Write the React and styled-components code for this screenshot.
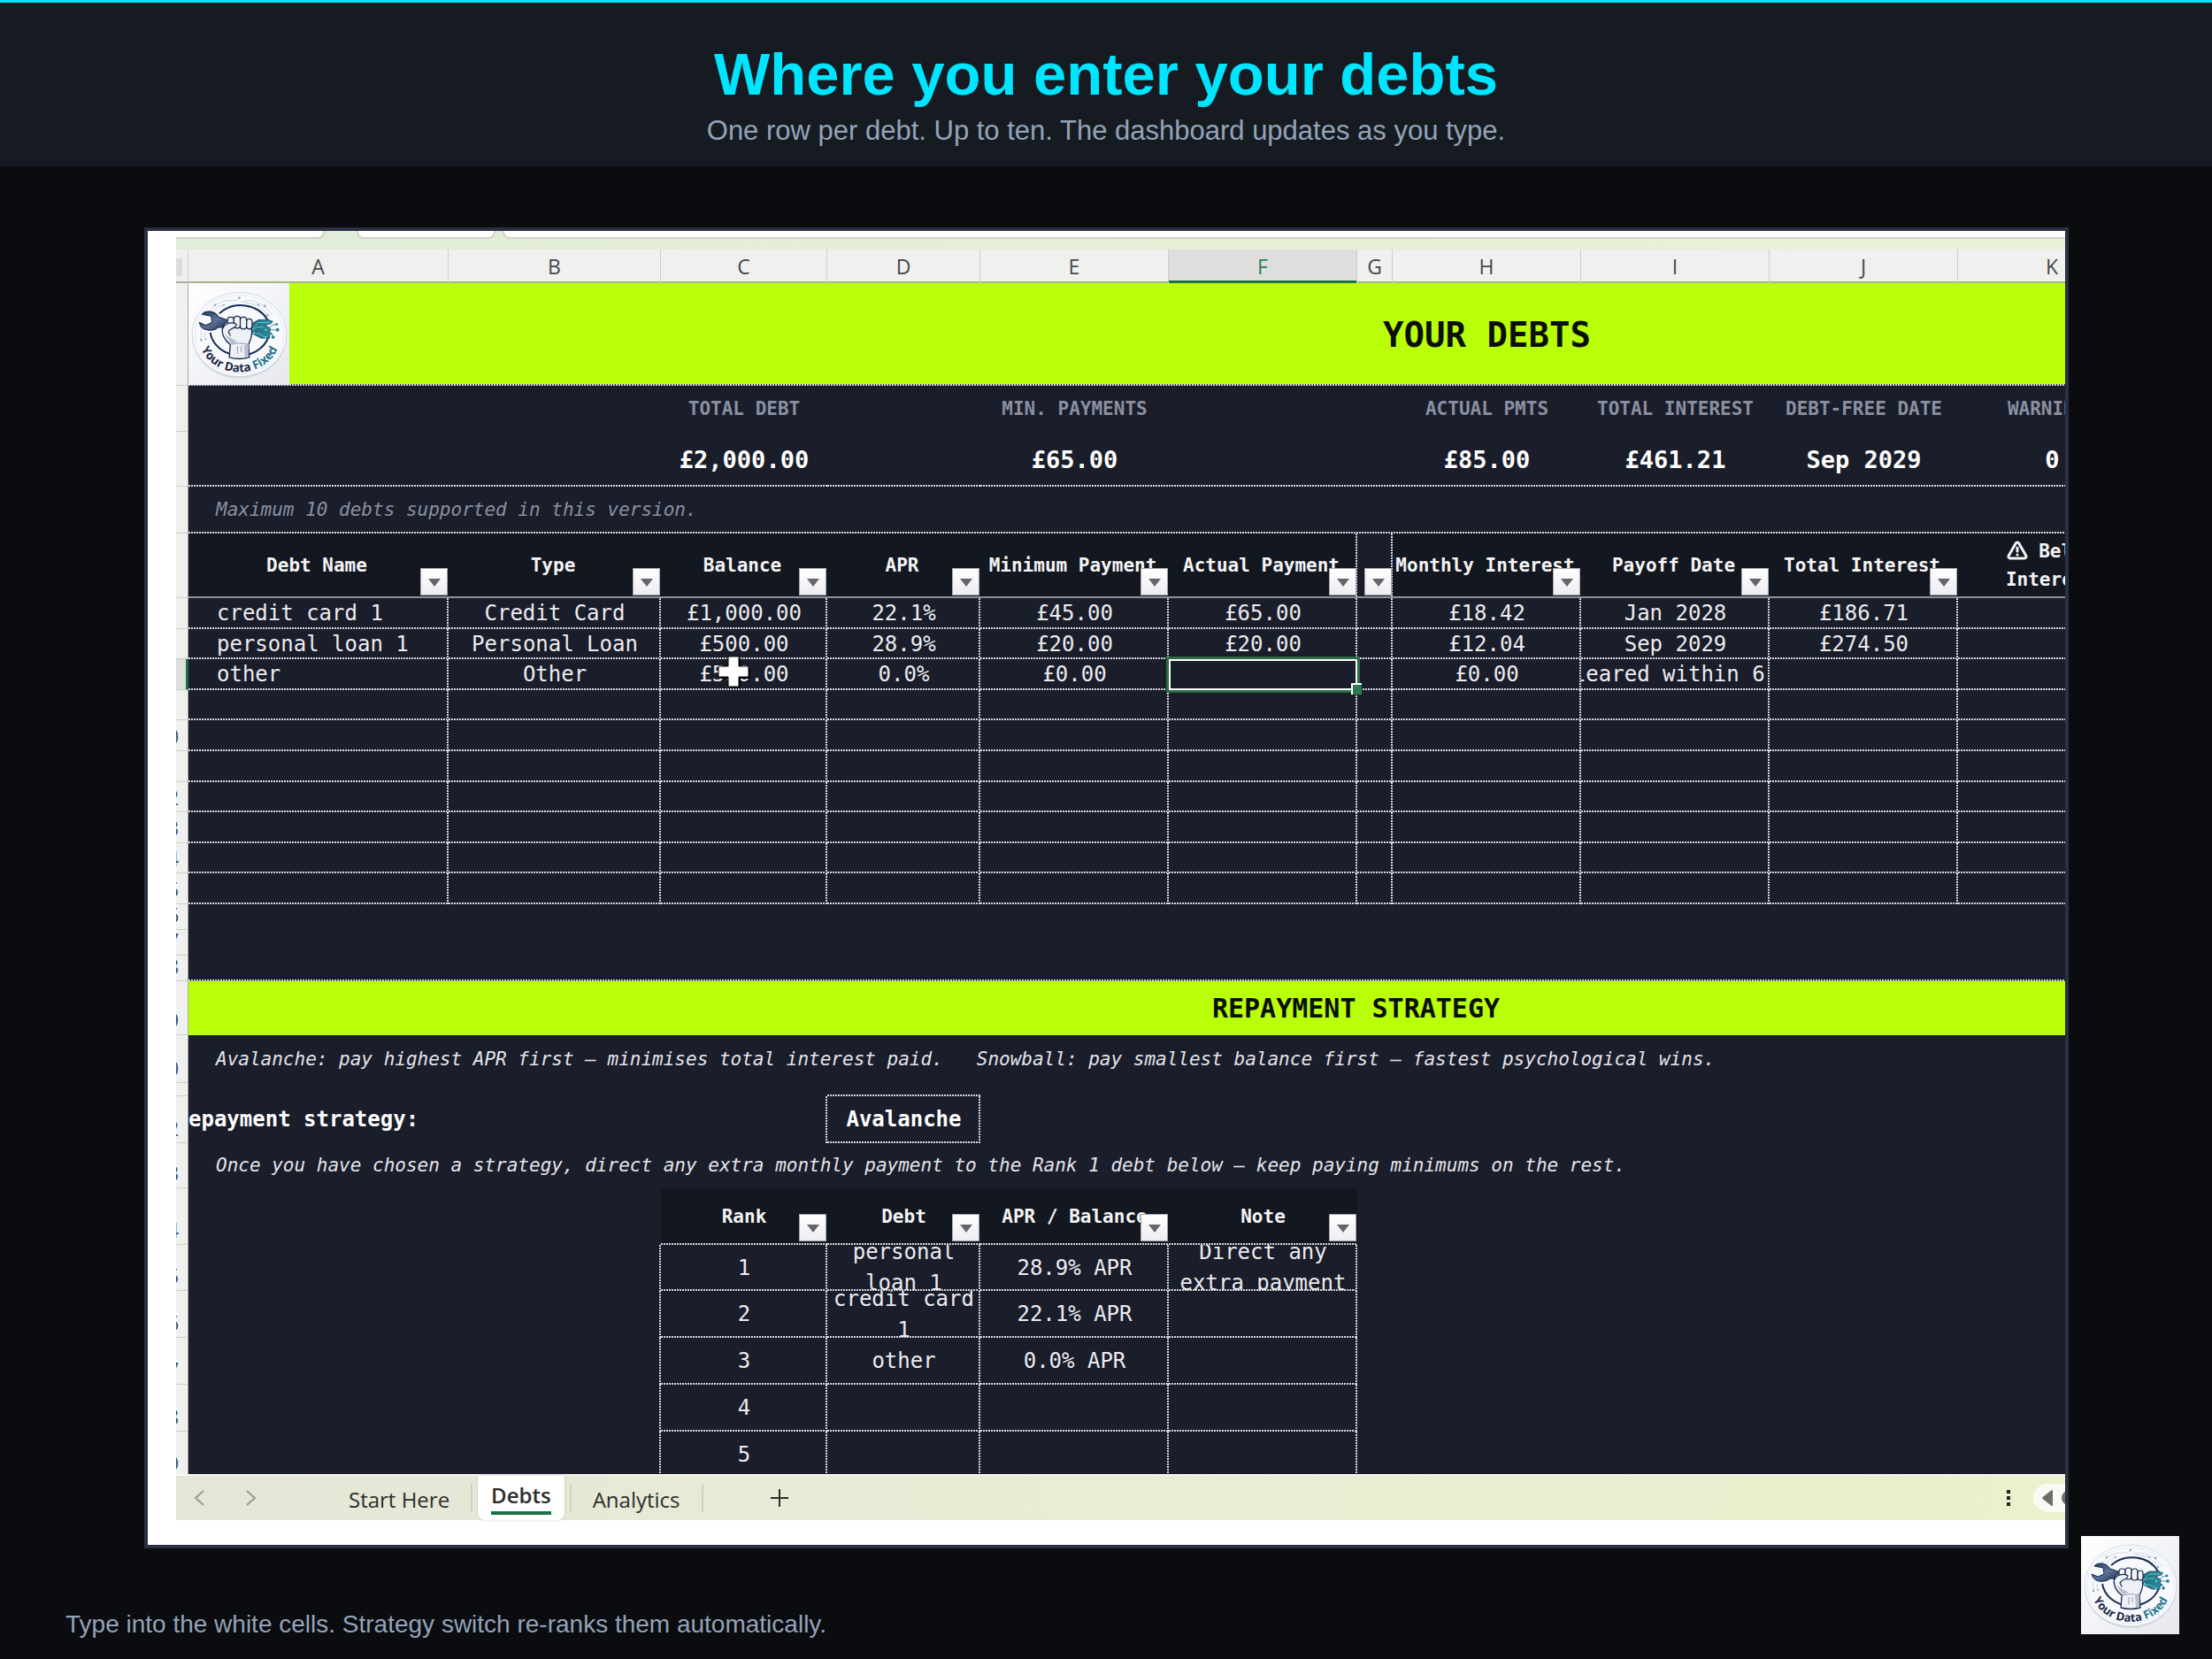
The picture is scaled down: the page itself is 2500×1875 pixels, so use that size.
import React from "react";
import styled, { createGlobalStyle, css } from "styled-components";
import { TriangleAlert } from "lucide-react";

const columns = [
  { name: "A", width: 294 },
  { name: "B", width: 240 },
  { name: "C", width: 188 },
  { name: "D", width: 173 },
  { name: "E", width: 213 },
  { name: "F", width: 213 },
  { name: "G", width: 40 },
  { name: "H", width: 213 },
  { name: "I", width: 213 },
  { name: "J", width: 213 },
  { name: "K", width: 213 },
];

// gutter, A to K, then the two columns that scroll out of view
const template = `14px ${columns.map((c) => `${c.width}px`).join(" ")} 426px 296px`;

const totals = [
  { label: "", value: "", span: 2 },
  { label: "TOTAL DEBT", value: "£2,000.00" },
  { label: "", value: "" },
  { label: "MIN. PAYMENTS", value: "£65.00" },
  { label: "", value: "", span: 2 },
  { label: "ACTUAL PMTS", value: "£85.00" },
  { label: "TOTAL INTEREST", value: "£461.21" },
  { label: "DEBT-FREE DATE", value: "Sep 2029" },
  { label: "WARNINGS", value: "0" },
  { label: "", value: "", span: 2 },
];

const debtHeads = [
  "Debt Name",
  "Type",
  "Balance",
  "APR",
  "Minimum Payment",
  "Actual Payment",
  "",
  "Monthly Interest",
  "Payoff Date",
  "Total Interest",
];

const debts = [
  ["credit card 1", "Credit Card", "£1,000.00", "22.1%", "£45.00", "£65.00", "", "£18.42", "Jan 2028", "£186.71", ""],
  ["personal loan 1", "Personal Loan", "£500.00", "28.9%", "£20.00", "£20.00", "", "£12.04", "Sep 2029", "£274.50", ""],
  ["other", "Other", "£500.00", "0.0%", "£0.00", "", "", "£0.00", "leared within 6 ", "", ""],
];

const emptyDebt = Array(11).fill("");

const debtRows = [35, 34, 35, 34, 35, 35, 34, 35, 34, 35].map((height, i) => ({
  height,
  num: i + 6,
  cells: debts[i] || emptyDebt,
}));

const ranks = [
  { num: 25, height: 52, cells: ["1", "personal loan 1", "28.9% APR", "Direct any extra payment"] },
  { num: 26, height: 53, cells: ["2", "credit card 1", "22.1% APR", ""] },
  { num: 27, height: 53, cells: ["3", "other", "0.0% APR", ""] },
  { num: 28, height: 53, cells: ["4", "", "", ""] },
  { num: 29, height: 53, cells: ["5", "", "", ""] },
];

const Logo = ({ className, id }) => (
  <svg className={className} viewBox="0 0 111 111" preserveAspectRatio="none" role="img">
    <defs>
      <linearGradient id={`${id}-paper`} x1="0" y1="0" x2="1" y2="1">
        <stop offset="0" stopColor="#ffffff" />
        <stop offset="1" stopColor="#e6e8ee" />
      </linearGradient>
      <linearGradient id={`${id}-steel`} x1="0" y1="0" x2="1" y2="1">
        <stop offset="0" stopColor="#1f3357" />
        <stop offset="0.5" stopColor="#5b7398" />
        <stop offset="1" stopColor="#1c2c4e" />
      </linearGradient>
      <linearGradient id={`${id}-data`} x1="0" y1="0" x2="1" y2="0">
        <stop offset="0" stopColor="#22406b" />
        <stop offset="1" stopColor="#2a8f9a" />
      </linearGradient>
      <path id={`${id}-arc`} d="M11 58 A45 39 0 0 0 101 58" />
    </defs>
    <rect width="111" height="111" fill={`url(#${id}-paper)`} />
    <ellipse cx="56" cy="58" rx="52" ry="46" fill="#d5d9e2" />
    <ellipse cx="56" cy="56" rx="52" ry="46" fill="#f8f9fc" stroke="#bcc8d8" strokeWidth="0.6" />
    <ellipse cx="56" cy="56" rx="49" ry="43" fill="none" stroke="#d3dbe6" strokeWidth="0.5" />
    <g fill="none" stroke="#b4c2d2" strokeWidth="0.6">
      <path d="M22 33 L29 24 L40 19 L52 19 L56 16" />
      <path d="M28 31 L33 26 L39 24" />
      <path d="M58 20 L70 19 L84 25 L92 35" />
      <path d="M61 21 L77 24 L87 34" />
      <path d="M14 61 V52 M18 60 V54" />
    </g>
    <g fill="#8fa5bd">
      <circle cx="56" cy="16" r="1.3" />
      <circle cx="29" cy="24" r="1.2" />
      <circle cx="39" cy="24" r="1" />
      <circle cx="77" cy="24" r="1.1" />
      <circle cx="84" cy="25" r="1.4" />
      <circle cx="87" cy="35" r="1.2" />
      <circle cx="14" cy="62" r="1.2" />
      <circle cx="19" cy="61" r="1" />
    </g>
    <path
      d="M34 33 A33 29 0 0 1 87 40 M88 59 A33 29 0 0 1 24 54"
      fill="none"
      stroke="#1b2d50"
      strokeWidth="2"
    />
    <path
      d="M15 34 C19 29 29 30 33 37 L45 41 L45 49 L33 48 C27 53 14 53 12 43 L19 46 L26 43 L25 36 Z"
      fill={`url(#${id}-steel)`}
      stroke="#16264a"
      strokeWidth="1"
      strokeLinejoin="round"
    />
    <path
      d="M49 50 L70 44 L77 40 L89 40 L91 44 L84 46 L90 49 L89 60 L80 60 L70 55 L52 53 Z"
      fill={`url(#${id}-data)`}
      stroke="#1d4266"
      strokeWidth="0.8"
      strokeLinejoin="round"
    />
    <g fill="none" stroke="#63d3cf" strokeWidth="0.9">
      <path d="M60 53 H68 L75 48 H83" />
      <path d="M70 50 L77 43 H90" />
      <path d="M66 55 H78 L84 59" />
    </g>
    <g fill="none" stroke="#35859a" strokeWidth="0.9">
      <path d="M88 50 L92 46 L96 45 M89 51 H97 M88 56 H92 L95 59 M90 42 H93" />
    </g>
    <g fill="#2c7f93">
      <circle cx="97" cy="45" r="1.4" />
      <circle cx="98" cy="51" r="1.9" />
      <circle cx="93" cy="59" r="1.7" />
      <circle cx="91" cy="42" r="1.6" />
      <circle cx="91" cy="55" r="1.2" />
    </g>
    <g fill="#6de4f0">
      <circle cx="72" cy="54" r="1" />
      <circle cx="85" cy="51" r="1.1" />
      <circle cx="85" cy="59" r="1" />
      <circle cx="65" cy="54" r="0.9" />
    </g>
    <path
      d="M38 47 C39 43 44 41 51 42 L69 49 C71 55 69 61 66 67 L67 81 Q56 84 45 81 L46 67 C41 63 35 57 38 47 Z"
      fill="#eef0f5"
      stroke="#1b2d50"
      strokeWidth="1.3"
      strokeLinejoin="round"
    />
    <path d="M61 68 L62 81 Q65 81 66 80 L66 66 Z M40 56 L47 66 L54 64 Z" fill="#b7c0d2" />
    <path d="M46 67 Q56 64 66 67 M54 69 V77 M58 69 V75" fill="none" stroke="#7b89a5" strokeWidth="0.8" />
    <g fill="#f4f5f9" stroke="#1b2d50" strokeWidth="1.2">
      <rect x="43" y="37" width="7" height="11" rx="3" />
      <rect x="50" y="36" width="7" height="13" rx="3" />
      <rect x="57" y="37" width="7" height="13" rx="3" />
      <rect x="64" y="39" width="6" height="11" rx="3" />
    </g>
    <path
      d="M38 49 C40 43 50 42 53 45 C52 50 45 49 44 53 L46 57"
      fill="#eef0f5"
      stroke="#1b2d50"
      strokeWidth="1.2"
      strokeLinecap="round"
    />
    <text fontFamily="Open Sans, sans-serif" fontWeight="700" fontSize="13" textAnchor="middle" fill="#1a2545">
      <textPath href={`#${id}-arc`} startOffset="50%">
        Your Data <tspan fill="#21708a">Fixed</tspan>
      </textPath>
    </text>
  </svg>
);

const Filter = ({ column, raised }) => (
  <FilterButton type="button" aria-label={`Filter ${column}`} $raised={raised}>
    <svg width="14" height="10" viewBox="0 0 14 10">
      <path d="M0 1 H14 L7 10 Z" fill="#66666a" />
    </svg>
  </FilterButton>
);

const SheetRow = ({ num, height, current, children }) => (
  <Row $height={height}>
    <Gutter scope="row" $current={current}>
      {num > 9 && <span>{num}</span>}
    </Gutter>
    {children}
  </Row>
);

const App = () => {
  return (
    <Page>
      <GlobalStyle />
      <Header>
        <h1>Where you enter your debts</h1>
        <p>One row per debt. Up to ten. The dashboard updates as you type.</p>
      </Header>

      <Main>
        <Frame>
          <FormulaBar>
            <BarBox $width="168px" $first />
            <BarBox $width="157px" />
            <BarBox $grow />
          </FormulaBar>

          <Viewport>
            <Sheet>
              <thead>
                <Row $height={38}>
                  <Corner />
                  {columns.map((c) => (
                    <ColumnHead key={c.name} scope="col" $current={c.name === "F"}>
                      {c.name}
                    </ColumnHead>
                  ))}
                  <ColumnHead />
                  <ColumnHead />
                </Row>
              </thead>
              <tbody>
                <SheetRow num={1} height={116}>
                  <Banner $span={13} $size="39px" $bottom>
                    <SheetLogo id="sheet-logo" />
                    YOUR DEBTS
                  </Banner>
                </SheetRow>
                <SheetRow num={2} height={52}>
                  {totals.map((t, i) => (
                    <LabelCell key={i} $span={t.span}>
                      {t.label}
                    </LabelCell>
                  ))}
                </SheetRow>
                <SheetRow num={3} height={62}>
                  {totals.map((t, i) => (
                    <ValueCell key={i} $span={t.span} $bottom>
                      {t.value}
                    </ValueCell>
                  ))}
                </SheetRow>
                <SheetRow num={4} height={53}>
                  <NoteCell $span={13} $bottom $muted>
                    Maximum 10 debts supported in this version.
                  </NoteCell>
                </SheetRow>
                <SheetRow num={5} height={73}>
                  {debtHeads.map((head, i) => (
                    <HeadCell key={i} $solid $blank={!head} $right={i === 5 || i === 6}>
                      {head}
                      <Filter column={head || "G"} />
                    </HeadCell>
                  ))}
                  <HeadCell $solid>
                    <span>
                      <WarningIcon size={24} strokeWidth={3} /> Below
                      <br />
                      Interest
                    </span>
                  </HeadCell>
                </SheetRow>

                {debtRows.map((row) => (
                  <SheetRow key={row.num} num={row.num} height={row.height} current={row.num === 8}>
                    {row.cells.map((text, i) => {
                      const selected = row.num === 8 && i === 5;
                      const hovered = row.num === 8 && i === 2;
                      return (
                        <Cell key={i} $bottom $right $left={i === 0} $open={selected || hovered}>
                          {text}
                          {selected && <Selection />}
                          {hovered && (
                            <Pointer viewBox="0 0 38 38">
                              <path
                                d="M13 2 H25 V13 H36 V25 H25 V36 H13 V25 H2 V13 H13 Z"
                                transform="translate(1 1)"
                                fill="#05060a"
                              />
                              <path d="M12 1 H24 V12 H35 V24 H24 V35 H12 V24 H1 V12 H12 Z" fill="#ffffff" stroke="#05060a" />
                            </Pointer>
                          )}
                        </Cell>
                      );
                    })}
                  </SheetRow>
                ))}

                <SheetRow num={16} height={29} />
                <SheetRow num={17} height={29} />
                <SheetRow num={18} height={29}>
                  <Cell $span={13} $bottom />
                </SheetRow>
                <SheetRow num={19} height={61}>
                  <Banner $span={12} $size="30px">
                    REPAYMENT STRATEGY
                  </Banner>
                </SheetRow>
                <SheetRow num={20} height={54}>
                  <NoteCell $span={13}>
                    Avalanche: pay highest APR first — minimises total interest paid.{"\u00a0\u00a0 "}
                    Snowball: pay smallest balance first — fastest psychological wins.
                  </NoteCell>
                </SheetRow>
                <SheetRow num={21} height={15}>
                  <Cell $span={3} />
                  <Cell $bottom />
                </SheetRow>
                <SheetRow num={22} height={53}>
                  <StrategyLabel $span={3} $right>
                    <label htmlFor="strategy">epayment strategy:</label>
                  </StrategyLabel>
                  <Cell $bottom $right>
                    <StrategySelect id="strategy" defaultValue="Avalanche">
                      <option>Avalanche</option>
                    </StrategySelect>
                  </Cell>
                </SheetRow>
                <SheetRow num={23} height={51}>
                  <NoteCell $span={13}>
                    Once you have chosen a strategy, direct any extra monthly payment to the Rank 1 debt below — keep
                    paying minimums on the rest.
                  </NoteCell>
                </SheetRow>
                <SheetRow num={24} height={64}>
                  <Cell $span={2} />
                  {["Rank", "Debt", "APR / Balance", "Note"].map((head) => (
                    <HeadCell key={head} $bottom>
                      {head}
                      <Filter column={head} raised />
                    </HeadCell>
                  ))}
                </SheetRow>
                {ranks.map((row) => (
                  <SheetRow key={row.num} num={row.num} height={row.height}>
                    <Cell $span={2} $right />
                    {row.cells.map((text, i) => (
                      <Cell key={i} $bottom $right $wrap>
                        {text}
                      </Cell>
                    ))}
                  </SheetRow>
                ))}
              </tbody>
            </Sheet>
          </Viewport>

          <TabBar>
            <Arrows>
              <IconButton type="button" aria-label="Previous sheet">
                <svg width="14" height="20" viewBox="0 0 14 20">
                  <path d="M12 2 L3 10 L12 18" />
                </svg>
              </IconButton>
              <IconButton type="button" aria-label="Next sheet">
                <svg width="14" height="20" viewBox="0 0 14 20">
                  <path d="M2 2 L11 10 L2 18" />
                </svg>
              </IconButton>
            </Arrows>
            <Tab type="button">Start Here</Tab>
            <Divider />
            <ActiveTab type="button">
              <span>Debts</span>
            </ActiveTab>
            <Divider />
            <Tab type="button">Analytics</Tab>
            <Divider />
            <AddButton type="button" aria-label="Add sheet">
              <svg width="20" height="20" viewBox="0 0 20 20">
                <path d="M10 0 V20 M0 10 H20" />
              </svg>
            </AddButton>
            <Dots>
              <i />
              <i />
              <i />
            </Dots>
            <ScrollBar>
              <svg width="36" height="32" viewBox="0 0 36 32">
                <path d="M11 16 L21 8 V24 Z" fill="#6c6e68" stroke="#6c6e68" strokeWidth="2" strokeLinejoin="round" />
                <circle cx="40" cy="16" r="8" fill="#6c6e68" />
              </svg>
            </ScrollBar>
          </TabBar>
        </Frame>
      </Main>

      <Footer>Type into the white cells. Strategy switch re-ranks them automatically.</Footer>
      <CornerLogo id="corner-logo" />
    </Page>
  );
};

const GlobalStyle = createGlobalStyle`
  * {
    box-sizing: border-box;
  }
  body {
    margin: 0;
    background: #0a0c10;
  }
  button, select {
    font: inherit;
    border: none;
    background: none;
    padding: 0;
  }
`;

const Page = styled.div`
  position: relative;
  display: flex;
  flex-direction: column;
  height: 100vh;
  overflow: hidden;
  background: #0a0c10;
  font-family: "Liberation Sans", Arial, sans-serif;
`;

const Header = styled.header`
  height: 188px;
  padding-top: 41px;
  border-top: 3px solid #00e5ff;
  background: #161b22;
  text-align: center;
  h1 {
    margin: 0;
    font-size: 67px;
    line-height: 80px;
    font-weight: 700;
    color: #00e5ff;
  }
  p {
    margin: 6px 0 0;
    font-size: 31px;
    line-height: 36px;
    color: #94a3b8;
  }
`;

const Main = styled.main`
  flex: 1;
  min-height: 0;
  display: flex;
  padding: 69px 162px 0 163px;
`;

const Frame = styled.section`
  flex: 1;
  min-width: 0;
  display: flex;
  flex-direction: column;
  padding: 0 0 28px 32px;
  border: 4px solid #2a3142;
  background: #ffffff;
  overflow: hidden;
`;

const FormulaBar = styled.div`
  display: flex;
  height: 21px;
  background: linear-gradient(90deg, #e1ecd9, #e9f2d4);
`;

const BarBox = styled.div`
  height: 9px;
  width: ${({ $width }) => $width || "auto"};
  flex: ${({ $grow }) => ($grow ? "1" : "none")};
  margin-right: ${({ $first, $grow }) => ($first ? "36px" : $grow ? "0" : "8px")};
  background: #ffffff;
  border: 2px solid #cfd3c8;
  border-top: none;
  border-left-width: ${({ $first }) => ($first ? "0" : "2px")};
  border-right-width: ${({ $grow }) => ($grow ? "0" : "2px")};
  border-radius: ${({ $first, $grow }) => ($first ? "0 0 8px 0" : $grow ? "0 0 0 8px" : "0 0 8px 8px")};
`;

const Viewport = styled.div`
  flex: 1;
  min-height: 0;
  overflow: hidden;
  background: linear-gradient(90deg, #f0f1ee 14px, #1a1d2a 14px);
`;

const Sheet = styled.table`
  display: block;
  font-family: "DejaVu Sans Mono", "Liberation Mono", monospace;
  font-size: 24px;
  color: #ececf0;
  thead,
  tbody {
    display: block;
  }
`;

const Row = styled.tr`
  display: grid;
  grid-template-columns: ${template};
  grid-template-rows: ${({ $height }) => $height}px;
`;

const Corner = styled.td`
  padding: 0;
  border-right: 1px solid #d4d4d2;
  border-bottom: 2px solid #a9aba8;
  background: linear-gradient(#dcdcda, #dcdcda) 0 10px / 7px 20px no-repeat #f0f0ee;
`;

const ColumnHead = styled.th`
  padding: 0;
  text-align: center;
  font-family: "Open Sans", "Noto Sans", sans-serif;
  font-size: 23px;
  font-weight: 400;
  line-height: 38px;
  color: ${({ $current }) => ($current ? "#2f8052" : "#46484a")};
  background: ${({ $current }) => ($current ? "#dededc" : "#f0f0ee")};
  border-right: 1px solid #cdcdd0;
  box-shadow: inset 0 ${({ $current }) => ($current ? "-3px #1e7145" : "-2px #a6b587")};
`;

const Gutter = styled.th`
  display: flex;
  align-items: flex-end;
  justify-content: flex-end;
  padding: 0;
  overflow: hidden;
  font-family: "Open Sans", "Noto Sans", sans-serif;
  font-size: 23px;
  font-weight: 400;
  line-height: 32px;
  color: #3a4a68;
  background: ${({ $current }) => ($current ? "#dcdedb" : "#f0f1ee")};
  border-right: ${({ $current }) => ($current ? "3px solid #1e7145" : "1px solid #a9aba8")};
  border-bottom: 1px solid #cfd0cd;
  span {
    flex: none;
    width: 46px;
    text-align: center;
  }
`;

const bottomDots = "repeating-linear-gradient(90deg, #d6d6dd 0 2px, #1a1d2a 2px 3px) 0 100% / 100% 2px no-repeat";
const rightDots = "repeating-linear-gradient(#d6d6dd 0 2px, #1a1d2a 2px 3px) 100% 0 / 2px 100% no-repeat";

const lines = css`
  background: ${({ $bottom, $right }) =>
    [$right && rightDots, $bottom && bottomDots, "linear-gradient(transparent, transparent)"]
      .filter(Boolean)
      .join(", ")};
`;

const Cell = styled.td`
  position: relative;
  display: flex;
  align-items: center;
  justify-content: ${({ $left }) => ($left ? "flex-start" : "center")};
  grid-column: span ${({ $span }) => $span || 1};
  padding: ${({ $left }) => ($left ? "0 0 0 32px" : "0")};
  min-width: 0;
  min-height: 0;
  overflow: ${({ $open }) => ($open ? "visible" : "hidden")};
  z-index: ${({ $open }) => ($open ? 1 : 0)};
  white-space: ${({ $wrap }) => ($wrap ? "normal" : "pre")};
  text-align: center;
  line-height: 35px;
  ${lines}
`;

const Banner = styled(Cell)`
  background-color: #b9ff0a;
  color: #0b0f08;
  font-size: ${({ $size }) => $size};
  font-weight: 700;
`;

const LabelCell = styled(Cell)`
  font-size: 21px;
  font-weight: 700;
  color: #8a90a2;
`;

const ValueCell = styled(Cell)`
  font-size: 27px;
  font-weight: 700;
  color: #ffffff;
`;

const NoteCell = styled(Cell)`
  justify-content: flex-start;
  padding-left: 31px;
  font-size: 21px;
  font-style: italic;
  white-space: nowrap;
  color: ${({ $muted }) => ($muted ? "#8a90a2" : "#e4e4ea")};
`;

const HeadCell = styled(Cell)`
  padding-right: ${({ $solid }) => ($solid ? "4px" : "0")};
  font-size: 21px;
  font-weight: 700;
  line-height: 32px;
  color: #f4f4f6;
  background-color: ${({ $blank }) => ($blank ? "#1a1d2a" : "#13171f")};
  border-bottom: ${({ $solid }) => ($solid ? "2px solid #8f8f9b" : "none")};
`;

const WarningIcon = styled(TriangleAlert)`
  vertical-align: -4px;
`;

const StrategyLabel = styled(Cell)`
  justify-content: flex-start;
  font-weight: 700;
  color: #ffffff;
`;

const StrategySelect = styled.select`
  width: 100%;
  appearance: none;
  text-align: center;
  text-align-last: center;
  font-weight: 700;
  color: #ffffff;
`;

const FilterButton = styled.button`
  position: absolute;
  right: 1px;
  bottom: ${({ $raised }) => ($raised ? "4px" : "1px")};
  display: flex;
  align-items: center;
  justify-content: center;
  width: 31px;
  height: 31px;
  background: linear-gradient(#ffffff, #ececf2);
  border: 1px solid #a5a7b0;
  cursor: pointer;
`;

const Selection = styled.div`
  position: absolute;
  inset: -3px;
  border: 3px solid #2b6b48;
  box-shadow: inset 0 0 0 2px #ffffff;
  &::after {
    content: "";
    position: absolute;
    right: -5px;
    bottom: -5px;
    width: 10px;
    height: 11px;
    background: #2b7b4e;
    border: 2px solid #ffffff;
    border-right: none;
    border-bottom: none;
  }
`;

const Pointer = styled.svg`
  position: absolute;
  left: 64px;
  top: -4px;
  width: 38px;
  height: 38px;
`;

const SheetLogo = styled(Logo)`
  position: absolute;
  left: 0;
  top: 0;
  width: 114px;
  height: 115px;
`;

const CornerLogo = styled(Logo)`
  position: absolute;
  right: 37px;
  bottom: 28px;
  width: 111px;
  height: 111px;
`;

const TabBar = styled.nav`
  display: flex;
  align-items: center;
  height: 52px;
  border-top: 2px solid #f6f7f0;
  background: linear-gradient(90deg, #e5e6d8, #e9edd4 50%, #eaf1cb);
  font-family: "Open Sans", "Noto Sans", sans-serif;
  font-size: 24px;
  color: #2c2e2a;
`;

const Arrows = styled.div`
  display: flex;
  gap: 35px;
  padding: 0 74px 0 14px;
`;

const IconButton = styled.button`
  display: flex;
  justify-content: center;
  width: 24px;
  cursor: pointer;
  path {
    fill: none;
    stroke: #9a9c92;
    stroke-width: 2;
  }
`;

const Tab = styled.button`
  padding: 2px 24px 0;
  color: inherit;
  cursor: pointer;
`;

const ActiveTab = styled.button`
  align-self: stretch;
  margin: 0 6px;
  padding: 0 15px 2px;
  background: #ffffff;
  border-radius: 0 0 8px 8px;
  box-shadow: 0 0 3px rgba(0, 0, 0, 0.2);
  font-weight: 600;
  color: inherit;
  cursor: pointer;
  span {
    display: block;
    line-height: 36px;
    border-bottom: 4px solid #1e7145;
  }
`;

const Divider = styled.span`
  width: 2px;
  height: 32px;
  background: #cfd1c3;
`;

const AddButton = styled(IconButton)`
  margin-left: 74px;
  path {
    stroke: #2c2e2a;
  }
`;

const Dots = styled.span`
  display: flex;
  flex-direction: column;
  gap: 3px;
  margin-left: auto;
  margin-right: 26px;
  i {
    width: 4px;
    height: 4px;
    background: #23241f;
  }
`;

const ScrollBar = styled.div`
  display: flex;
  flex: none;
  height: 32px;
  border-radius: 16px 0 0 16px;
  background: #f9faf4;
`;

const Footer = styled.footer`
  height: 125px;
  padding: 69px 74px 0;
  font-size: 28px;
  line-height: 34px;
  color: #94a3b8;
`;

export default App;
